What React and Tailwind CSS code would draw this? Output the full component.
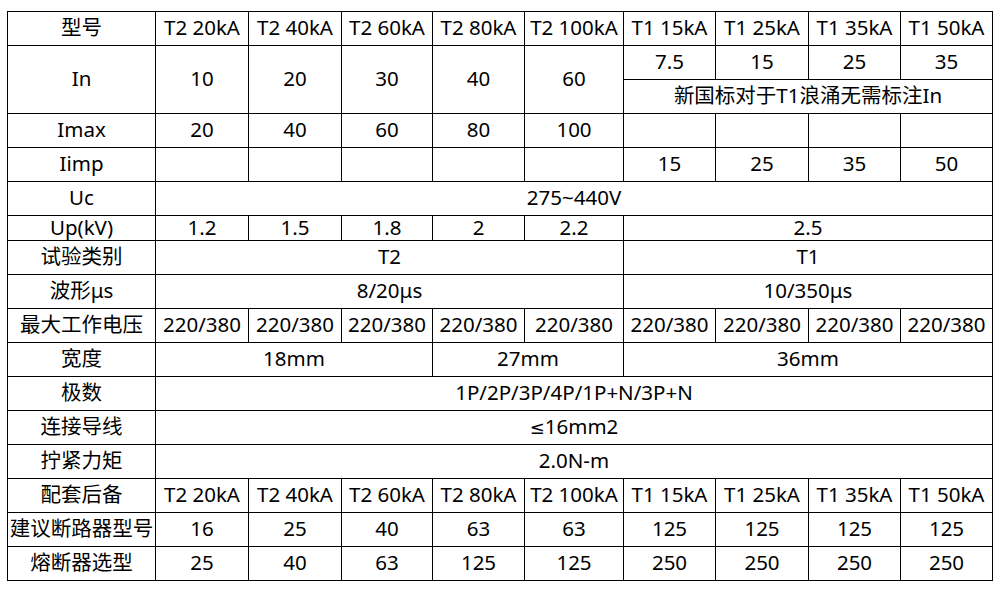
import React from "react";

const td = "border border-black text-center align-middle p-0 pb-[2px] leading-none whitespace-nowrap";
const colClasses = ["w-[148px]", "w-[93px]", "w-[93px]", "w-[91px]", "w-[92px]", "w-[99px]", "w-[92px]", "w-[93px]", "w-[92px]", "w-[92px]"];

function Row({ short = false, cells }) {
  return (
    <tr className={short ? "h-[25px]" : "h-[34px]"}>
      {cells.map((c, i) => {
        const o = typeof c === "object" && c !== null && !React.isValidElement(c) ? c : { t: c };
        return (
          <td key={i} className={td} colSpan={o.cs || 1} rowSpan={o.rs || 1}>
            {o.t}
          </td>
        );
      })}
    </tr>
  );
}

export default function App() {
  const models = ["T2 20kA", "T2 40kA", "T2 60kA", "T2 80kA", "T2 100kA", "T1 15kA", "T1 25kA", "T1 35kA", "T1 50kA"];
  return (
    <div className="w-[1003px] h-[590px] bg-white pt-[11px] pl-[7px]">
      <table className="w-[986px] border-collapse table-fixed text-[20.5px] text-black font-['Noto_Sans','Noto_Sans_CJK_SC',sans-serif]">
        <colgroup>
          {colClasses.map((c, i) => (
            <col key={i} className={c} />
          ))}
        </colgroup>
        <tbody>
          <Row cells={["型号", ...models]} />
          <Row cells={[{ t: "In", rs: 2 }, { t: "10", rs: 2 }, { t: "20", rs: 2 }, { t: "30", rs: 2 }, { t: "40", rs: 2 }, { t: "60", rs: 2 }, "7.5", "15", "25", "35"]} />
          <Row cells={[{ t: "新国标对于T1浪涌无需标注In", cs: 4 }]} />
          <Row cells={["Imax", "20", "40", "60", "80", "100", "", "", "", ""]} />
          <Row cells={["Iimp", "", "", "", "", "", "15", "25", "35", "50"]} />
          <Row cells={["Uc", { t: "275~440V", cs: 9 }]} />
          <Row short cells={["Up(kV)", "1.2", "1.5", "1.8", "2", "2.2", { t: "2.5", cs: 4 }]} />
          <Row cells={["试验类别", { t: "T2", cs: 5 }, { t: "T1", cs: 4 }]} />
          <Row cells={["波形μs", { t: "8/20μs", cs: 5 }, { t: "10/350μs", cs: 4 }]} />
          <Row cells={["最大工作电压", ...Array(9).fill("220/380")]} />
          <Row cells={["宽度", { t: "18mm", cs: 3 }, { t: "27mm", cs: 2 }, { t: "36mm", cs: 4 }]} />
          <Row cells={["极数", { t: "1P/2P/3P/4P/1P+N/3P+N", cs: 9 }]} />
          <Row
            cells={[
              "连接导线",
              {
                t: (
                  <>
                    <span className="font-['DejaVu_Sans',sans-serif] text-[18px]">≤</span>16mm2
                  </>
                ),
                cs: 9,
              },
            ]}
          />
          <Row cells={["拧紧力矩", { t: "2.0N-m", cs: 9 }]} />
          <Row cells={["配套后备", ...models]} />
          <Row cells={["建议断路器型号", "16", "25", "40", "63", "63", "125", "125", "125", "125"]} />
          <Row cells={["熔断器选型", "25", "40", "63", "125", "125", "250", "250", "250", "250"]} />
        </tbody>
      </table>
    </div>
  );
}
